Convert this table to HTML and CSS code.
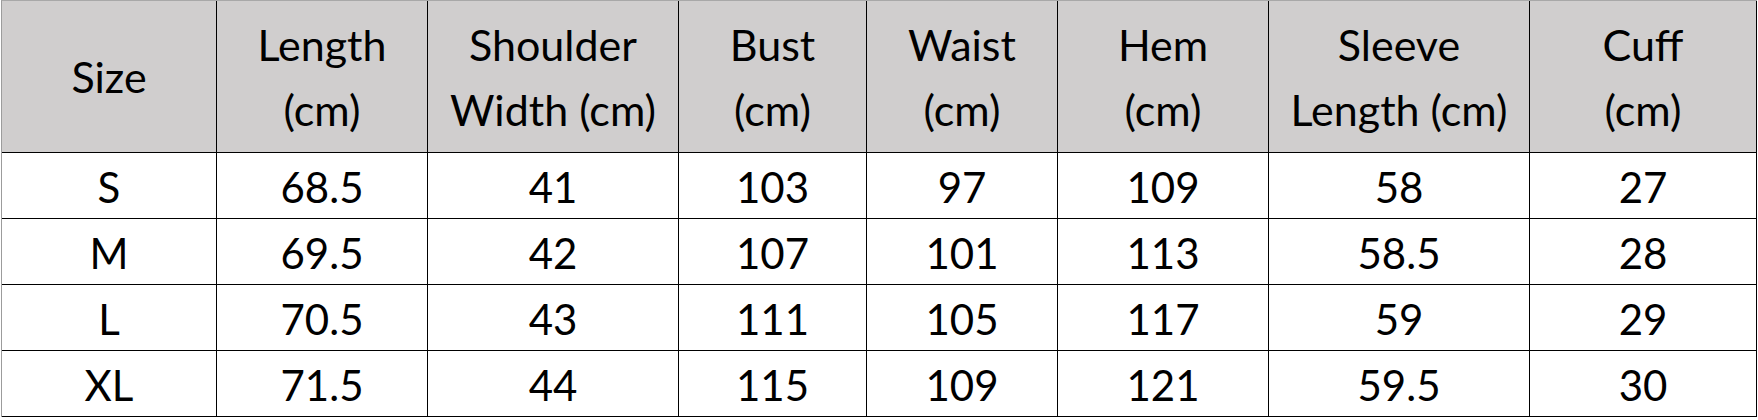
FILE: index.html
```html
<!DOCTYPE html>
<html>
<head>
<meta charset="utf-8">
<link rel="stylesheet" href="styles.css">
</head>
<body>
<div class="sheet">
  <div class="cell head">Size</div>
  <div class="cell head">Length<br>(cm)</div>
  <div class="cell head">Shoulder<br>Width (cm)</div>
  <div class="cell head">Bust<br>(cm)</div>
  <div class="cell head">Waist<br>(cm)</div>
  <div class="cell head">Hem<br>(cm)</div>
  <div class="cell head">Sleeve<br>Length (cm)</div>
  <div class="cell head">Cuff<br>(cm)</div>

  <div class="cell">S</div><div class="cell">68.5</div><div class="cell">41</div><div class="cell">103</div><div class="cell">97</div><div class="cell">109</div><div class="cell">58</div><div class="cell">27</div>
  <div class="cell">M</div><div class="cell">69.5</div><div class="cell">42</div><div class="cell">107</div><div class="cell">101</div><div class="cell">113</div><div class="cell">58.5</div><div class="cell">28</div>
  <div class="cell">L</div><div class="cell">70.5</div><div class="cell">43</div><div class="cell">111</div><div class="cell">105</div><div class="cell">117</div><div class="cell">59</div><div class="cell">29</div>
  <div class="cell">XL</div><div class="cell">71.5</div><div class="cell">44</div><div class="cell">115</div><div class="cell">109</div><div class="cell">121</div><div class="cell">59.5</div><div class="cell">30</div>
</div>
</body>
</html>
```
FILE: styles.css
```css
html, body {
  margin: 0;
  padding: 0;
  background: #ffffff;
}

.sheet {
  margin-left: 1px;
  display: grid;
  grid-template-columns: 215px 211px 251px 188px 191px 211px 261px 227px;
  grid-template-rows: 152px repeat(4, 66px);
  width: max-content;
  border-left: 1px solid #9c9c9c;
  border-top: 1px solid #a8a8a8;
  font-family: "Lato", "Liberation Sans", sans-serif;
  font-size: 42px;
  color: #000000;
}

.cell {
  box-sizing: border-box;
  border-right: 1px solid #000000;
  border-bottom: 1px solid #000000;
  display: flex;
  align-items: center;
  justify-content: center;
  text-align: center;
  line-height: 66px;
  padding-top: 2px;
}

.head {
  background: #d0cece;
  font-size: 43px;
  line-height: 65px;
  padding-top: 0;
}
```
